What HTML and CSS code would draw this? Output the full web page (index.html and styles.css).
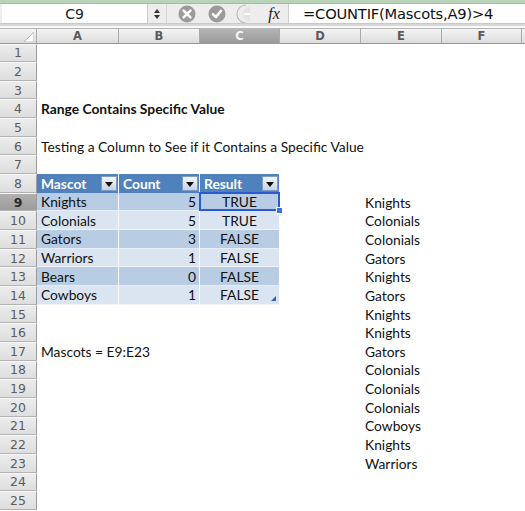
FILE: index.html
```html
<!DOCTYPE html>
<html>
<head>
<meta charset="utf-8">
<link rel="stylesheet" href="styles.css">
</head>
<body>
<div class="topstrip"></div>
<div class="fbar">
  <div class="namebox">C9</div>
  <div class="stepper">
    <svg width="8" height="12" viewBox="0 0 8 12"><path d="M1 5 L4 1 L7 5 Z M1 7 L4 11 L7 7 Z" fill="#333"/></svg>
  </div>
  <div class="btns">
    <svg width="18" height="18" viewBox="0 0 18 18"><circle cx="9" cy="9" r="8.5" fill="#9b9b9b"/><path d="M5.6 5.6 L12.4 12.4 M12.4 5.6 L5.6 12.4" stroke="#fff" stroke-width="2.6" stroke-linecap="round"/></svg>
    <svg width="18" height="18" viewBox="0 0 18 18"><circle cx="9" cy="9" r="8.5" fill="#9b9b9b"/><path d="M5 9.2 L8 12 L13 5.8" stroke="#fff" stroke-width="2.6" fill="none" stroke-linecap="round" stroke-linejoin="round"/></svg>
    <svg class="fxcirc" width="14" height="20" viewBox="0 0 14 20"><path d="M10 1 A9 9 0 0 0 10 19" stroke="#bbb" stroke-width="1.2" fill="none"/><circle cx="14" cy="10" r="7" fill="#e2e2e2"/><path d="M8 10 H14" stroke="#fff" stroke-width="2"/></svg>
  </div>
  <div class="fx">fx</div>
  <div class="formula">=COUNTIF(Mascots,A9)&gt;4</div>
</div>
<div class="sep"></div>
<div class="sheet">
  <div class="row colhead">
    <div class="corner"><svg width="10" height="10" viewBox="0 0 10 10"><path d="M10 0 L10 10 L0 10 Z" fill="#fff" stroke="#aaa" stroke-width="0.8"/></svg></div>
    <div class="ch">A</div><div class="ch">B</div><div class="ch selh">C</div><div class="ch">D</div><div class="ch">E</div><div class="ch">F</div><div class="ch end"></div>
  </div>
  <div class="row"><div class="rh">1</div><div class="c"></div><div class="c"></div><div class="c"></div><div class="c"></div><div class="c"></div><div class="c"></div></div>
  <div class="row"><div class="rh">2</div><div class="c"></div><div class="c"></div><div class="c"></div><div class="c"></div><div class="c"></div><div class="c"></div></div>
  <div class="row"><div class="rh">3</div><div class="c"></div><div class="c"></div><div class="c"></div><div class="c"></div><div class="c"></div><div class="c"></div></div>
  <div class="row"><div class="rh">4</div><div class="c bold">Range Contains Specific Value</div><div class="c"></div><div class="c"></div><div class="c"></div><div class="c"></div><div class="c"></div></div>
  <div class="row"><div class="rh">5</div><div class="c"></div><div class="c"></div><div class="c"></div><div class="c"></div><div class="c"></div><div class="c"></div></div>
  <div class="row"><div class="rh">6</div><div class="c">Testing a Column to See if it Contains a Specific Value</div><div class="c"></div><div class="c"></div><div class="c"></div><div class="c"></div><div class="c"></div></div>
  <div class="row"><div class="rh">7</div><div class="c"></div><div class="c"></div><div class="c"></div><div class="c"></div><div class="c"></div><div class="c"></div></div>
  <div class="row"><div class="rh">8</div><div class="c th">Mascot<span class="dd"></span></div><div class="c th">Count<span class="dd"></span></div><div class="c th">Result<span class="dd"></span></div><div class="c"></div><div class="c"></div><div class="c"></div></div>
  <div class="row"><div class="rh selr">9</div><div class="c dk">Knights</div><div class="c dk num">5</div><div class="c dk ctr sel">TRUE</div><div class="c"></div><div class="c">Knights</div><div class="c"></div></div>
  <div class="row"><div class="rh">10</div><div class="c lt">Colonials</div><div class="c lt num">5</div><div class="c lt ctr">TRUE</div><div class="c"></div><div class="c">Colonials</div><div class="c"></div></div>
  <div class="row"><div class="rh">11</div><div class="c dk">Gators</div><div class="c dk num">3</div><div class="c dk ctr">FALSE</div><div class="c"></div><div class="c">Colonials</div><div class="c"></div></div>
  <div class="row"><div class="rh">12</div><div class="c lt">Warriors</div><div class="c lt num">1</div><div class="c lt ctr">FALSE</div><div class="c"></div><div class="c">Gators</div><div class="c"></div></div>
  <div class="row"><div class="rh">13</div><div class="c dk">Bears</div><div class="c dk num">0</div><div class="c dk ctr">FALSE</div><div class="c"></div><div class="c">Knights</div><div class="c"></div></div>
  <div class="row"><div class="rh">14</div><div class="c lt">Cowboys</div><div class="c lt num">1</div><div class="c lt ctr last">FALSE</div><div class="c"></div><div class="c">Gators</div><div class="c"></div></div>
  <div class="row"><div class="rh">15</div><div class="c"></div><div class="c"></div><div class="c"></div><div class="c"></div><div class="c">Knights</div><div class="c"></div></div>
  <div class="row"><div class="rh">16</div><div class="c"></div><div class="c"></div><div class="c"></div><div class="c"></div><div class="c">Knights</div><div class="c"></div></div>
  <div class="row"><div class="rh">17</div><div class="c">Mascots = E9:E23</div><div class="c"></div><div class="c"></div><div class="c"></div><div class="c">Gators</div><div class="c"></div></div>
  <div class="row"><div class="rh">18</div><div class="c"></div><div class="c"></div><div class="c"></div><div class="c"></div><div class="c">Colonials</div><div class="c"></div></div>
  <div class="row"><div class="rh">19</div><div class="c"></div><div class="c"></div><div class="c"></div><div class="c"></div><div class="c">Colonials</div><div class="c"></div></div>
  <div class="row"><div class="rh">20</div><div class="c"></div><div class="c"></div><div class="c"></div><div class="c"></div><div class="c">Colonials</div><div class="c"></div></div>
  <div class="row"><div class="rh">21</div><div class="c"></div><div class="c"></div><div class="c"></div><div class="c"></div><div class="c">Cowboys</div><div class="c"></div></div>
  <div class="row"><div class="rh">22</div><div class="c"></div><div class="c"></div><div class="c"></div><div class="c"></div><div class="c">Knights</div><div class="c"></div></div>
  <div class="row"><div class="rh">23</div><div class="c"></div><div class="c"></div><div class="c"></div><div class="c"></div><div class="c">Warriors</div><div class="c"></div></div>
  <div class="row"><div class="rh">24</div><div class="c"></div><div class="c"></div><div class="c"></div><div class="c"></div><div class="c"></div><div class="c"></div></div>
  <div class="row"><div class="rh">25</div><div class="c"></div><div class="c"></div><div class="c"></div><div class="c"></div><div class="c"></div><div class="c"></div></div>
</div>
</body>
</html>
```
FILE: styles.css
```css
html, body { margin: 0; padding: 0; background: #fff; overflow: hidden; }
body { width: 525px; height: 511px; font-family: "Lato", "Open Sans", sans-serif; }

.topstrip { height: 3px; background: #b9d3b9; border-bottom: 1px solid #9fbf9f; }

.fbar {
  display: flex; align-items: stretch; height: 19px;
  background: #ededed; border-bottom: 1px solid #c9c9c9;
}
.namebox {
  width: 145px; margin-left: 2px; background: #fff;
  font-family: "DejaVu Sans", sans-serif; font-size: 14px; color: #222;
  display: flex; align-items: center; justify-content: center;
  border-right: 1px solid #c9c9c9;
}
.stepper { width: 18px; display: flex; align-items: center; justify-content: center; border-right: 1px solid #d6d6d6; }
.btns { display: flex; align-items: center; gap: 12px; padding-left: 11px; width: 82px; overflow: hidden; }
.fxcirc { margin-left: -2px; }
.fx {
  width: 28px; display: flex; align-items: center; justify-content: center;
  font-family: "Liberation Serif", serif; font-style: italic; font-size: 16px; color: #222;
  border-right: 1px solid #cfcfcf;
}
.formula {
  flex: 1; background: #fff; padding-left: 14px;
  font-family: "DejaVu Sans", sans-serif; font-size: 14.7px; color: #111;
  display: flex; align-items: center; letter-spacing: -0.2px;
}
.sep { height: 2px; background: #d8d8d8; border-bottom: 2px solid #fafafa; }

.sheet { display: flex; flex-direction: column; }
.row {
  display: grid;
  grid-template-columns: 37px 82px 81px 80px 81px 81px 80px 3px;
  height: 18.67px;
  font-size: 13.8px;
}
.colhead { height: 15.5px; }
.corner, .ch {
  background: linear-gradient(#f4f4f4, #dcdcdc);
  border-right: 1px solid #a9a9a9; border-bottom: 1px solid #999;
  border-top: 1px solid #b5b5b5;
  box-sizing: border-box;
  font-family: "DejaVu Sans", sans-serif; font-weight: bold; font-size: 11.5px; color: #5a5a5a;
  display: flex; align-items: center; justify-content: center;
}
.corner { justify-content: flex-end; align-items: flex-end; padding: 0 2px 1px 0; }
.selh { background: linear-gradient(#b4b4b4, #9a9a9a); color: #f4f4f4; }
.end { border-right: none; }

.rh {
  background: linear-gradient(#ececec, #dedede);
  border-right: 1px solid #9c9c9c; border-bottom: 1px solid #b3b3b3;
  border-top: 1px solid #f8f8f8;
  box-sizing: border-box;
  font-family: "DejaVu Sans", sans-serif; font-size: 12.5px; color: #5c5c5c;
  display: flex; align-items: center; justify-content: center;
}
.selr { background: linear-gradient(#b0b0b0, #9c9c9c); color: #2a2a2a; font-weight: bold; }

.c {
  white-space: nowrap; padding: 0 4px; box-sizing: border-box;
  display: flex; align-items: center; color: #111; min-width: 0;
}
.bold { font-weight: bold; }
.th {
  background: #4f81bd; color: #fff; font-weight: bold;
  border-right: 1px solid #fff; padding-right: 1px;
}
.dd {
  margin-left: auto; width: 16px; height: 15px; box-sizing: border-box;
  border: 1px solid #7f9dc4; background: linear-gradient(#f4f6fa, #c6d3e4);
  position: relative;
}
.dd::after {
  content: ""; position: absolute; left: 3px; top: 5px;
  border-left: 4.5px solid transparent; border-right: 4.5px solid transparent; border-top: 5px solid #111;
}
.dk { background: #b8cce4; border-right: 1px solid #fff; border-bottom: 1px solid #e6edf6; }
.lt { background: #dbe5f1; border-right: 1px solid #fff; border-bottom: 1px solid #f0f4f9; }
.num { justify-content: flex-end; padding-right: 3px; }
.ctr { justify-content: center; }
.sel { position: relative; overflow: visible; }
.sel::before {
  content: ""; position: absolute; left: -1px; top: -1px; right: -1px; bottom: -1px;
  border: 2px solid #2a5bd0;
}
.sel::after {
  content: ""; position: absolute; right: -4px; bottom: -4px; width: 5px; height: 5px;
  background: #3c72e0; border: 1px solid #fff;
}
.last { position: relative; }
.last::after {
  content: ""; position: absolute; right: 3px; bottom: 3px;
  border-left: 5px solid transparent; border-bottom: 5px solid #2f62b8;
}
```
